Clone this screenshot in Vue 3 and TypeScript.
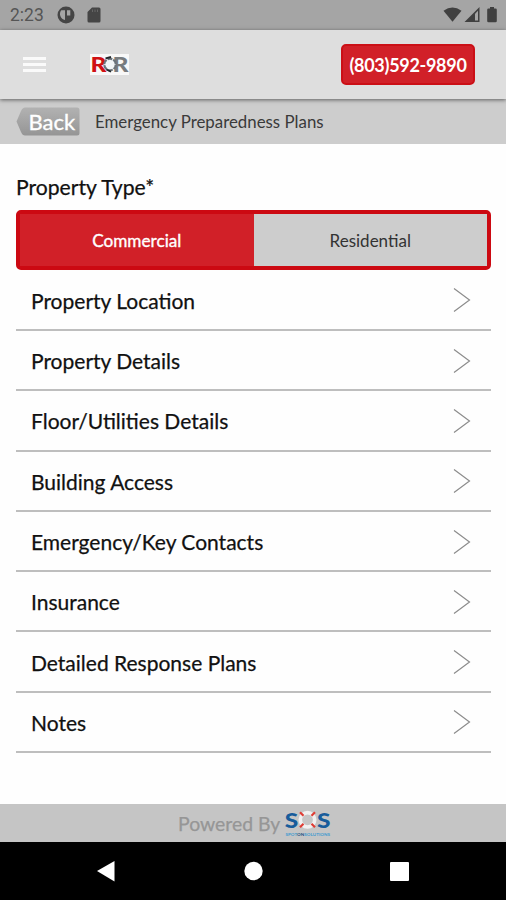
<script setup lang="ts">
const sections: string[] = [
  'Property Location',
  'Property Details',
  'Floor/Utilities Details',
  'Building Access',
  'Emergency/Key Contacts',
  'Insurance',
  'Detailed Response Plans',
  'Notes',
]
</script>

<template>
  <div class="screen">
    <div class="status">
      <span class="clock">2:23</span>
      <svg class="st-app" width="18" height="18" viewBox="0 0 18 18">
        <circle cx="9" cy="9" r="8.500" fill="#454545" />
        <path d="M4.300 4.200h3.700v9.700a6 6 0 0 1-3.700-9.700zM10 4.200h3.300v5.200H10z" fill="#a5a5a5" />
      </svg>
      <svg class="st-sd" width="14" height="16" viewBox="0 0 14 16">
        <path d="M5 .5h7a1.500 1.500 0 0 1 1.500 1.500v12a1.500 1.500 0 0 1-1.500 1.500H2A1.500 1.500 0 0 1 .5 14V5z" fill="#454545" />
        <path d="M5.500 2.500v2.500M8 2.500v2.500M10.500 2.500v2.500" stroke="#666" stroke-width="1" />
      </svg>
      <svg class="st-right" width="56" height="18" viewBox="0 0 56 18">
        <path d="M-.5 4.800Q8.500-2 17.500 4.800L8.500 15.800z" fill="#404040" />
        <path d="M35.500 1v15H20.500z" fill="#404040" />
        <path d="M31 7.700 34 4.700v9.900h-3z" fill="#a5a5a5" />
        <path d="M46 1h4v1.500h1.500a1.300 1.300 0 0 1 1.300 1.300V15a1.300 1.300 0 0 1-1.300 1.300h-7A1.300 1.300 0 0 1 43.200 15V3.800a1.300 1.300 0 0 1 1.300-1.300H46z" fill="#404040" />
      </svg>
    </div>

    <header class="appbar">
      <button class="menu" aria-label="Menu"><i></i><i></i><i></i></button>
      <svg class="ror" width="39" height="21" viewBox="0 0 39 21">
        <rect width="39" height="21" fill="#f8f8f8" />
        <text x="0.500" y="18" textLength="16" lengthAdjust="spacingAndGlyphs" class="ror-letter" fill="#cf1013">R</text>
        <text x="22.500" y="18" textLength="16" lengthAdjust="spacingAndGlyphs" class="ror-letter" fill="#777b7e">R</text>
        <circle cx="20" cy="10.500" r="5.800" fill="#f0f5f8" stroke="#69737b" stroke-width="2.200" stroke-dasharray="5 1" />
        <path d="M15.500 4.300 21 3M16.500 15.500l4.500 2.200" stroke="#20262b" stroke-width="1.800" />
      </svg>
      <a class="phone"><span>(803)592-9890</span></a>
    </header>

    <div class="crumb">
      <button class="back">
        <svg width="64" height="29" viewBox="0 0 64 29">
          <defs>
            <linearGradient id="backFill" x1="0" y1="0" x2="0" y2="1">
              <stop offset="0" stop-color="#b2b2b2" />
              <stop offset="1" stop-color="#959595" />
            </linearGradient>
          </defs>
          <path d="M9 .5h52a2.500 2.500 0 0 1 2.500 2.500v23a2.500 2.500 0 0 1-2.500 2.500H9Q6.500 28.500 5 25L.5 14.500 5 4Q6.500.5 9 .5z" fill="url(#backFill)" />
        </svg>
        <span>Back</span>
      </button>
      <span class="crumb-title">Emergency Preparedness Plans</span>
    </div>

    <main class="content">
      <div class="label"><span>Property Type*</span></div>
      <div class="toggle">
        <button class="seg on"><span>Commercial</span></button>
        <button class="seg"><span>Residential</span></button>
      </div>
      <ul class="list">
        <li v-for="name in sections" :key="name">
          <span>{{ name }}</span>
          <svg width="18" height="26" viewBox="0 0 18 26">
            <path d="M1 1.500 16.500 13 1 24.500" fill="none" stroke="#8c8c8c" stroke-width="1.200" />
          </svg>
        </li>
      </ul>
    </main>

    <footer class="powered">
      <span class="by">Powered By</span>
      <svg width="46" height="27" viewBox="0 0 46 27">
        <text x="-.3" y="18.300" textLength="13.500" lengthAdjust="spacingAndGlyphs" class="sos-letter">S</text>
        <text x="32" y="18.300" textLength="13.500" lengthAdjust="spacingAndGlyphs" class="sos-letter">S</text>
        <circle cx="22.500" cy="9.800" r="7.200" fill="none" stroke="#f0f0f0" stroke-width="3.600" />
        <path d="m15 2.300 3.500 3.500M30 2.300l-3.500 3.500M15 17.300l3.500-3.500M30 17.300l-3.500-3.500" stroke="#df3d35" stroke-width="2.200" />
        <text x=".5" y="26" textLength="44.500" lengthAdjust="spacing" class="sos-tag">SPOT<tspan fill="#174d80">ON</tspan>SOLUTIONS</text>
      </svg>
    </footer>

    <nav class="navbar">
      <svg width="506" height="58" viewBox="0 0 506 58">
        <path d="M97 29 114.500 19v20.500z" fill="#fff" />
        <circle cx="253.500" cy="29" r="9.200" fill="#fff" />
        <rect x="390" y="20" width="19" height="19" rx="1" fill="#fff" />
      </svg>
    </nav>
  </div>
</template>

<style>
body {
  margin: 0;
  background: #fff;
}
</style>

<style scoped>
.screen {
  width: 506px;
  height: 900px;
  display: flex;
  flex-direction: column;
  overflow: hidden;
  background: #fefefe;
  font-family: Lato, 'Liberation Sans', sans-serif;
  color: #111;
}
svg {
  overflow: visible;
}
button {
  border: 0;
  padding: 0;
  background: none;
  font: inherit;
  color: inherit;
}
.status {
  flex: none;
  height: 30px;
  box-sizing: border-box;
  padding: 0 6px 0 10px;
  display: flex;
  align-items: center;
  background: #a5a5a5;
}
.clock {
  width: 47px;
  font: 17.500px/32px Roboto, sans-serif;
  color: #555;
}
.st-sd {
  margin-left: 12px;
}
.st-right {
  margin-left: auto;
}
.appbar {
  flex: none;
  height: 69px;
  box-sizing: border-box;
  padding: 0 31px 0 23px;
  display: flex;
  align-items: center;
  background: #dedede;
  box-shadow: 0 1px 4px rgba(0, 0, 0, 0.55);
  z-index: 1;
}
.menu {
  width: 23px;
  display: grid;
  gap: 3px;
}
.menu i {
  height: 3px;
  background: #fafafa;
}
.ror {
  margin-left: 44px;
}
.ror-letter {
  font: 900 21.500px Lato, sans-serif;
}
.phone {
  margin-left: auto;
  width: 134px;
  height: 41px;
  box-sizing: border-box;
  border: 2px solid #cb0f16;
  border-radius: 5px;
  background: #d12028;
  color: #fff;
  display: flex;
  align-items: center;
  justify-content: center;
  font-size: 18px;
  font-weight: 700;
  letter-spacing: -0.300px;
}
.crumb {
  flex: none;
  height: 45px;
  box-sizing: border-box;
  padding-left: 16px;
  display: flex;
  align-items: center;
  background: #cdcdcd;
}
.back {
  width: 64px;
  height: 29px;
  display: grid;
}
.back > * {
  grid-area: 1 / 1;
}
.back span {
  padding-left: 12.500px;
  font-size: 22px;
  line-height: 30px;
  color: #fff;
  text-align: left;
  -webkit-text-stroke: 0.350px #fff;
}
.crumb-title {
  margin-left: 15px;
  font-size: 16.850px;
  color: #3a3a3a;
}
.content {
  flex: 1;
  padding: 31px 15px 0 16px;
}
.label {
  height: 35px;
  font-size: 21.150px;
  line-height: 25px;
  -webkit-text-stroke: 0.250px #111;
}
.toggle {
  height: 60px;
  box-sizing: border-box;
  border: 4px solid #cc0912;
  border-radius: 5px;
  display: grid;
  grid-template-columns: 1fr 1fr;
  background: #d12028;
}
.seg {
  display: flex;
  align-items: center;
  justify-content: center;
  font-size: 17px;
  color: #333;
  background: #cdcdcd;
}
.seg.on {
  color: #fff;
  background: #d12028;
  font-size: 17.200px;
  -webkit-text-stroke: 0.350px #fff;
}
.list {
  list-style: none;
  margin: 0;
  padding: 0.700px 0 0;
}
.list li {
  height: 60.300px;
  box-sizing: border-box;
  border-bottom: 2px solid #bebebe;
  padding: 1px 20px 0 15px;
  display: flex;
  align-items: center;
  justify-content: space-between;
  font-size: 21px;
  -webkit-text-stroke: 0.250px #111;
}
.powered {
  flex: none;
  height: 38px;
  padding-left: 178px;
  display: flex;
  align-items: center;
  background: #c5c5c5;
  color: #969696;
}
.by {
  width: 106.500px;
  font-size: 19.400px;
  -webkit-text-stroke: 0.250px #969696;
}
.sos-letter {
  font: 900 21.500px Lato, sans-serif;
  fill: #175c9b;
}
.sos-tag {
  font: 700 4.500px Lato, sans-serif;
  fill: #3b9ad0;
}
.navbar {
  flex: none;
  height: 58px;
  background: #000;
}
</style>
